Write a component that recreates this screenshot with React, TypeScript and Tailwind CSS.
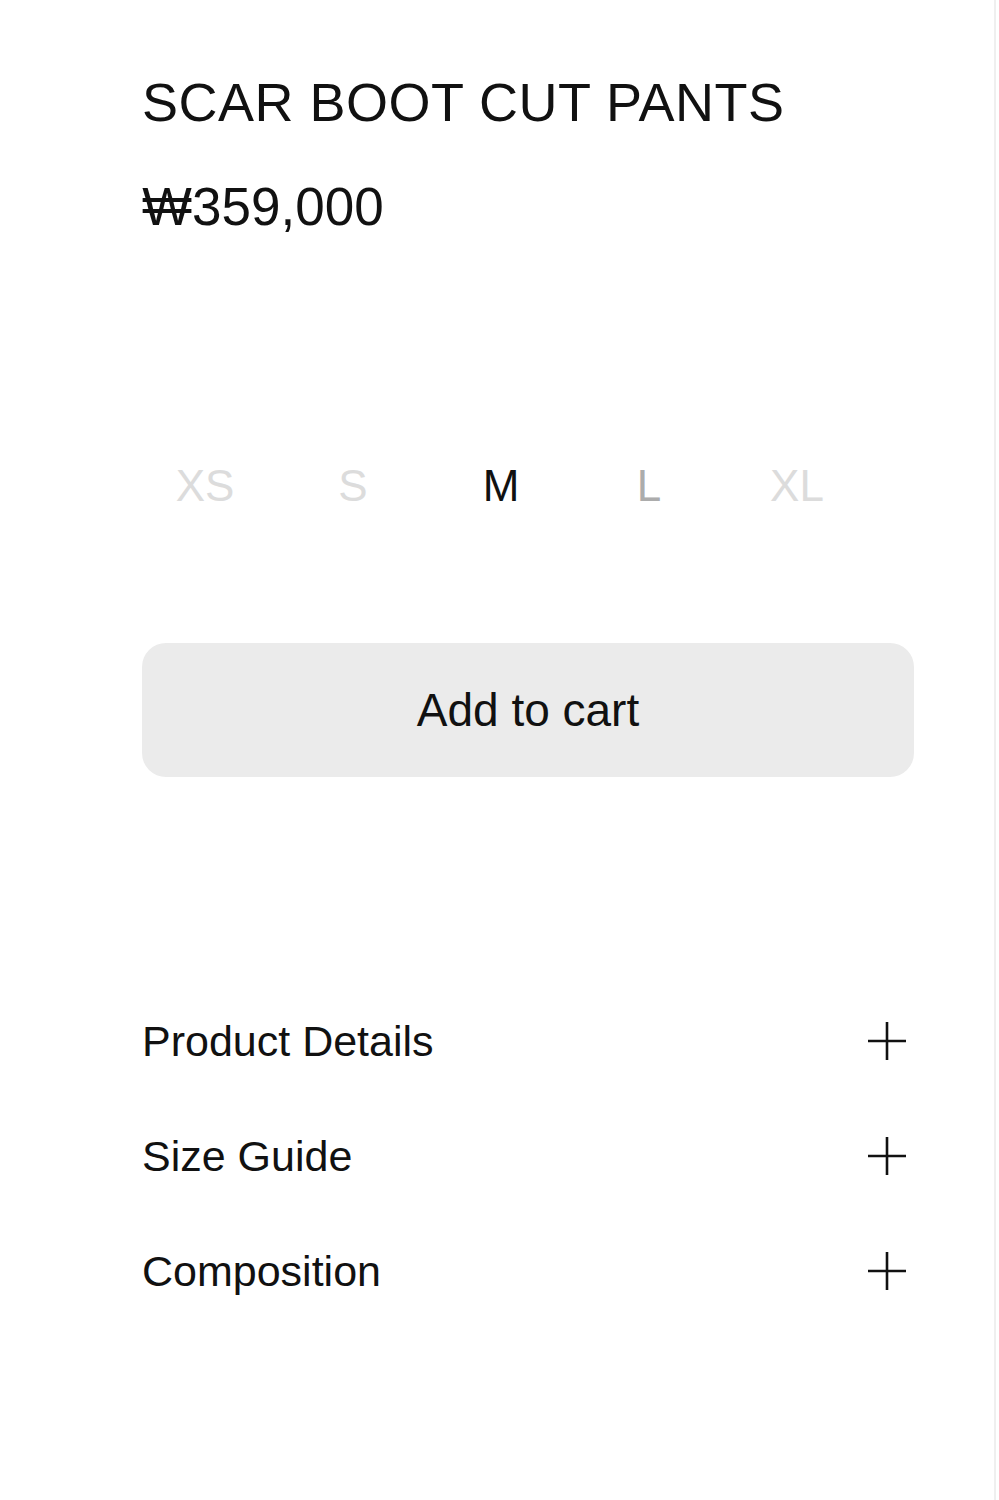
import React from "react";

const sizes = [
  { label: "XS", cls: "text-[#dcdcdc]" },
  { label: "S", cls: "text-[#dcdcdc]" },
  { label: "M", cls: "text-[#111111]" },
  { label: "L", cls: "text-[#acacac]" },
  { label: "XL", cls: "text-[#dcdcdc]" },
];

const sections = ["Product Details", "Size Guide", "Composition"];

function PlusIcon() {
  return (
    <svg width="38" height="38" viewBox="0 0 38 38" fill="none" className="shrink-0">
      <line x1="19" y1="0" x2="19" y2="38" stroke="#111" strokeWidth="2.6" />
      <line x1="0" y1="19" x2="38" y2="19" stroke="#111" strokeWidth="2.6" />
    </svg>
  );
}

export default function App() {
  return (
    <div
      className="w-[999px] min-h-[1500px] bg-white flex text-[#111111]"
      style={{ fontFamily: '"Liberation Sans", Arial, "DejaVu Sans", sans-serif' }}
    >
      <div className="w-[996px] min-h-[1500px] border-r-2 border-[#efefef] pl-[142px] pr-[80px] pt-[75px]">
        <div className="w-[772px] flex flex-col">
          <h1 className="text-[54px] leading-none font-normal tracking-[0.5px]">SCAR BOOT CUT PANTS</h1>
          <div className="mt-[51px] text-[53px] leading-none">₩359,000</div>

          <div className="mt-[231px] -ml-[11px] w-[740px] grid grid-cols-5">
            {sizes.map((s) => (
              <button key={s.label} className={`text-[44px] leading-none text-center ${s.cls}`}>
                {s.label}
              </button>
            ))}
          </div>

          <button className="mt-[135px] h-[134px] w-full rounded-[24px] bg-[#ebebeb] text-[46px] leading-none flex items-center justify-center">
            Add to cart
          </button>

          <div className="mt-[243px] flex flex-col gap-[72px]">
            {sections.map((t) => (
              <div key={t} className="h-[43px] flex items-center justify-between">
                <span className="text-[43px] leading-none">{t}</span>
                <div className="mr-[8px] -mt-[2px]">
                  <PlusIcon />
                </div>
              </div>
            ))}
          </div>
        </div>
      </div>
    </div>
  );
}
